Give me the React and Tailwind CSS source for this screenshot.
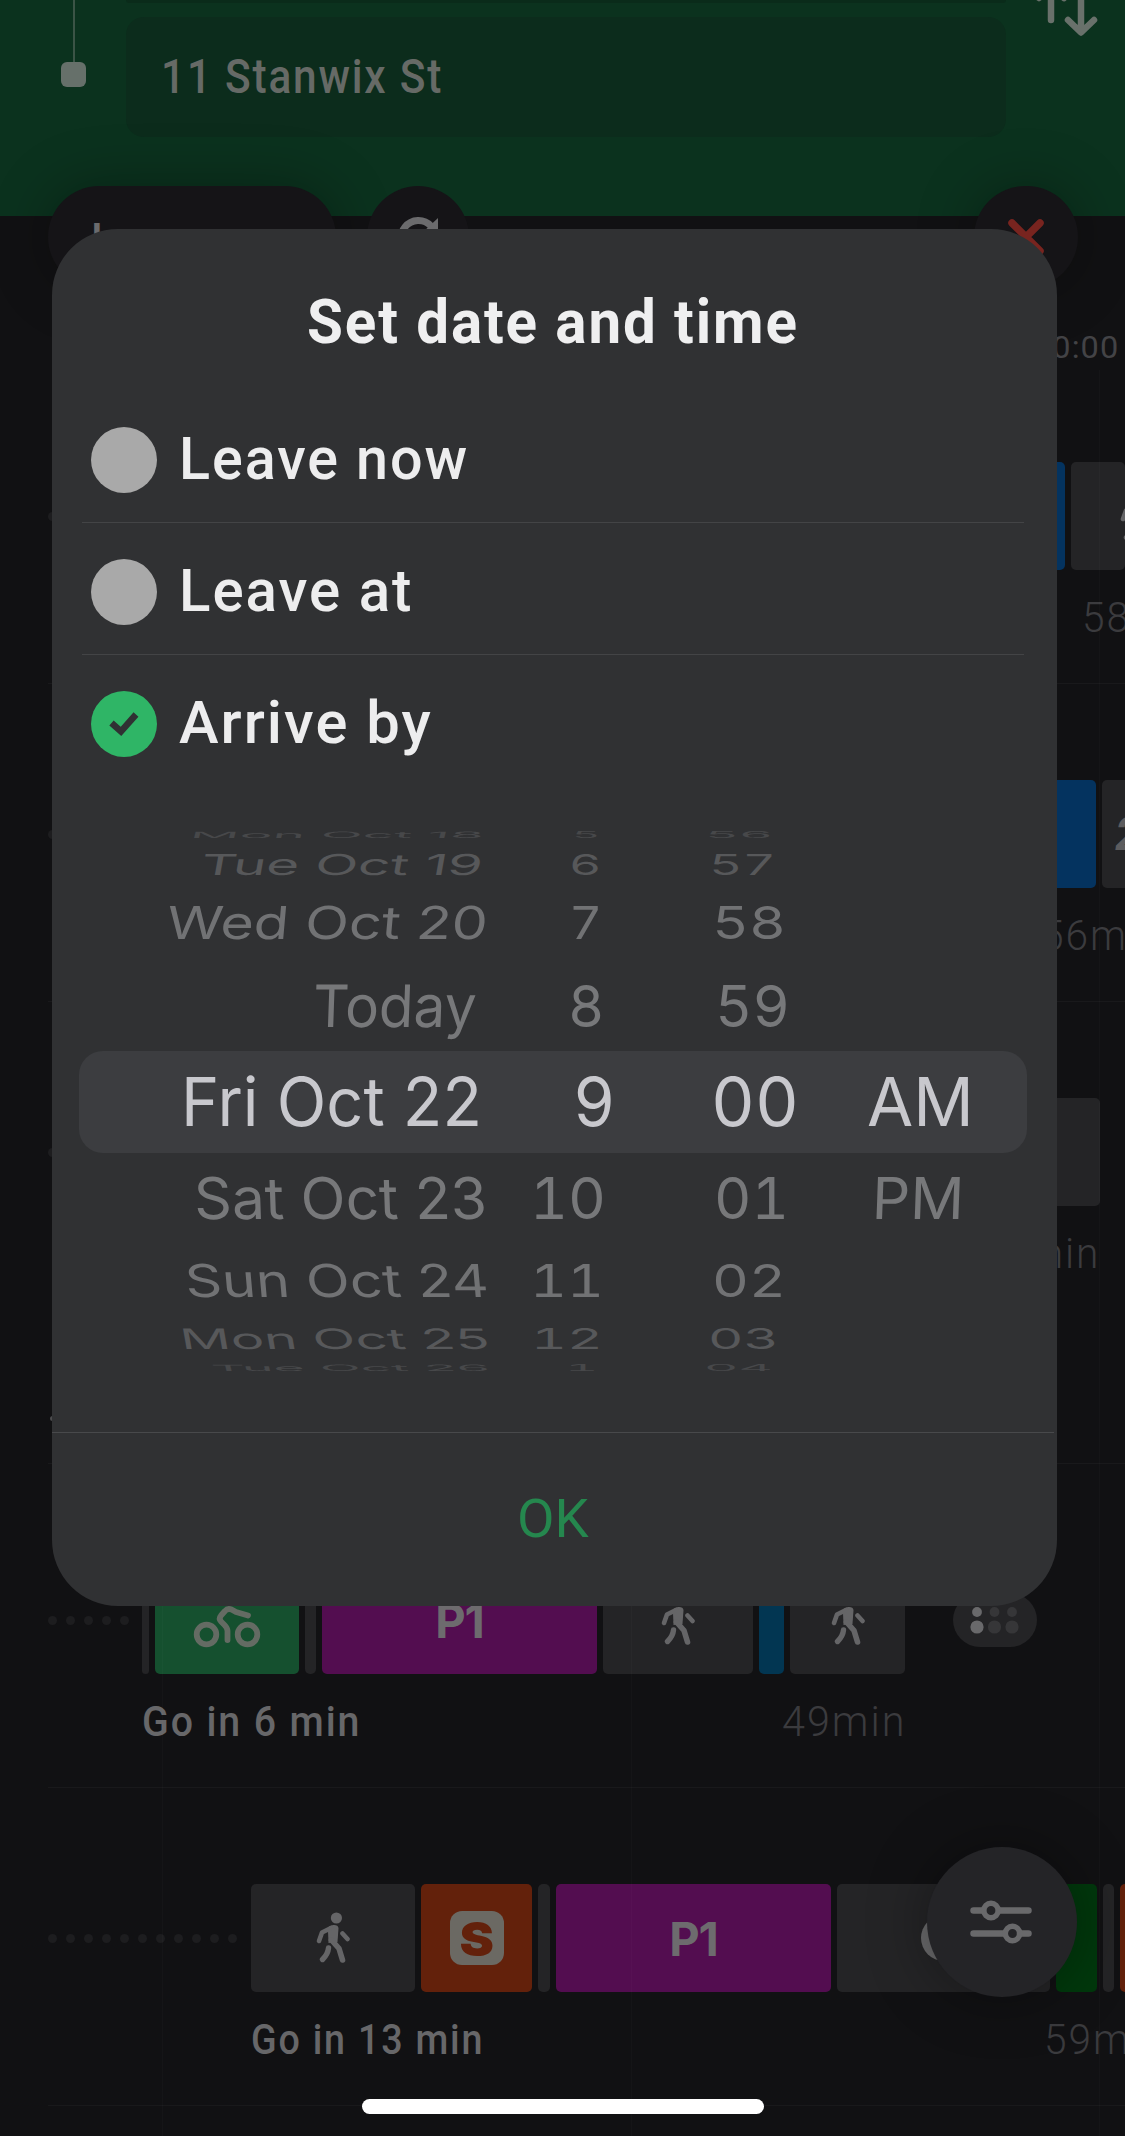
import React, { useLayoutEffect, useRef, useState } from "react";

/* Single line of text stretched horizontally to a fixed width. */
function Fit({ w, sy = 1, skew = 0, className = "", children }) {
  const ref = useRef(null);
  const [sx, setSx] = useState(1);
  useLayoutEffect(() => {
    setSx(w / ref.current.offsetWidth);
  }, [w, children]);
  return (
    <span className="flex shrink-0 items-center" style={{ width: w }}>
      <span
        ref={ref}
        className={`inline-block origin-left whitespace-nowrap leading-none ${className}`}
        style={{ transform: `skewX(${skew}deg) scale(${sx}, ${sy})` }}
      >
        {children}
      </span>
    </span>
  );
}

function Walk({ className = "" }) {
  return (
    <svg className={`shrink-0 ${className}`} width="34" height="52" viewBox="0 0 34 52" fill="none" stroke="#656567" strokeLinecap="round" strokeLinejoin="round">
      <circle cx="20.4" cy="6" r="5.6" fill="#656567" stroke="none" />
      <path d="M13 14.500 L17 13 Q22 12.500 22.500 16 L21.500 30 L12.500 31 L12 19 Z" fill="#656567" stroke="none" />
      <path d="M15 16 L6 20.500 L3 29" strokeWidth="4.6" />
      <path d="M26.500 21.500 L31.500 27" strokeWidth="4.6" />
      <path d="M15.500 28 L23 36.500 L26.500 48" strokeWidth="5.6" />
      <path d="M12.500 36 Q12 42 6.500 47.500" strokeWidth="5.4" />
    </svg>
  );
}

function Bike() {
  return (
    <svg className="shrink-0" width="68" height="56" viewBox="0 0 68 56" fill="none" stroke="#646b63" strokeWidth="5.8" strokeLinecap="round" strokeLinejoin="round">
      <circle cx="13.500" cy="42.500" r="9.800" />
      <circle cx="54.500" cy="42.500" r="9.800" />
      <path d="M34.500 48 V39 Q34.500 36 31.500 33 L28 29.500 Q25.500 26.500 28 23.500 L32 19 Q34.500 16 38.500 17.500 L43 20 L55 23.500" />
    </svg>
  );
}

function Sneaker() {
  return (
    <span className="flex h-[54px] w-[54px] items-center justify-center rounded-[12px] bg-[#6b6963]">
      <span className="scale-x-110 font-['Inter'] text-[47px] font-black leading-none text-[#63210b]">S</span>
    </span>
  );
}

const P1 = () => <span className="font-['Inter'] text-[47px] font-bold leading-none tracking-[-1px] text-[#6d6b6e]">P1</span>;

function Row({ pad = "pt-[96px]", line = "border-[#19191b]", start, dots = 1, bars, note, noteW, time, timeW, timeStart, badge }) {
  return (
    <div className={`ml-12 w-[1077px] shrink-0 border-b ${line} ${pad}`}>
      <div className="flex h-[108px] items-center">
        <div className="flex shrink-0 gap-[9px]" style={{ width: start - 48 }}>
          {Array.from({ length: dots }, (_, i) => (
            <i key={i} className="h-[9px] w-[9px] shrink-0 rounded-full bg-[#1d1d1f]" />
          ))}
        </div>
        <div className="flex shrink-0 gap-[6px]">
          {bars.map(([w, color, content], i) => (
            <div key={i} className={`flex h-[108px] shrink-0 items-center justify-center overflow-hidden rounded-[5px] ${color}`} style={{ width: w }}>
              {content}
            </div>
          ))}
        </div>
        {badge}
      </div>
      <div className="flex h-[95px] items-center">
        <div className="flex shrink-0" style={{ width: start - 48 }} />
        {note && <Fit w={noteW} className="font-['Roboto'] text-[42px] font-medium tracking-[2px] text-[#676769]">{note}</Fit>}
        <div className="shrink-0" style={{ width: timeStart - start - (note ? noteW : 0) }} />
        <Fit w={timeW} className="font-['Roboto'] text-[42px] font-light tracking-[2px] text-[#3b3b3e]">{time}</Fit>
      </div>
      <div className="h-[18px]" />
    </div>
  );
}

const GRAY = "bg-[#242426]";
const PURPLE = "bg-[#530d50]";

const wheel = [
  { h: 20, sy: 0.13, color: "text-[#47484a]", d: ["Mon Oct 18", 190, 294, -14], hr: ["5", 572, 28], m: ["56", 705, 68] },
  { h: 39, sy: 0.43, color: "text-[#57585a]", d: ["Tue Oct 19", 201, 282, -10], hr: ["6", 569, 32], m: ["57", 709, 67] },
  { h: 77, sy: 0.68, color: "text-[#717274]", d: ["Wed Oct 20", 167, 321, -5], hr: ["7", 569, 33], m: ["58", 712, 74] },
  { h: 90, sy: 0.87, color: "text-[#77787a]", d: ["Today", 313, 164, -2], hr: ["8", 568, 36], m: ["59", 715, 75] },
  { h: 102, sy: 1, color: "text-[#c8c8cd]", d: ["Fri Oct 22", 181, 301, 0], hr: ["9", 573, 42], m: ["00", 711, 88], ap: ["AM", 867, 107, 0] },
  { h: 89, sy: 0.86, color: "text-[#77787a]", d: ["Sat Oct 23", 194, 293, 2], hr: ["10", 530, 76], m: ["01", 714, 75], ap: ["PM", 872, 92, -2] },
  { h: 77, sy: 0.68, color: "text-[#717274]", d: ["Sun Oct 24", 185, 303, 5], hr: ["11", 530, 74], m: ["02", 712, 74] },
  { h: 40, sy: 0.42, color: "text-[#57585a]", d: ["Mon Oct 25", 180, 309, 10], hr: ["12", 531, 72], m: ["03", 708, 71] },
  { h: 18, sy: 0.13, color: "text-[#47484a]", d: ["Tue Oct 26", 211, 279, 14], hr: ["1", 565, 33], m: ["04", 704, 69] },
];

function WheelRow({ row }) {
  const cells = [row.d, row.hr, row.m, row.ap].filter(Boolean);
  let x = 79;
  return (
    <div className={`flex shrink-0 items-center ${row.sy === 1 ? "rounded-[24px] bg-[#3c3d40]" : ""}`} style={{ height: row.h }}>
      {cells.map(([t, left, w, skew = 0], i) => {
        const gap = left - x;
        x = left + w;
        return (
          <div key={left} className="-mt-px flex shrink-0" style={{ paddingLeft: gap }}>
            <Fit w={w} sy={row.sy} skew={skew} className={`font-['Inter'] text-[67px] ${i > 0 ? "tabular-nums" : ""} ${row.color}`}>{t}</Fit>
          </div>
        );
      })}
    </div>
  );
}

function Option({ label, w, checked }) {
  return (
    <div className="flex h-[132px] items-center pl-[39px]">
      <span className={`-mt-px flex h-[66px] w-[66px] items-center justify-center rounded-full ${checked ? "bg-[#2fb566]" : "bg-[#a9a9a9]"}`}>
        {checked && (
          <svg width="30" height="26" viewBox="0 0 30 26" fill="none" stroke="#303133" strokeWidth="6.500">
            <path d="M2.500 12 L12 20.500 L27 3.500" />
          </svg>
        )}
      </span>
      <div className="-mt-[3px] ml-[22px]">
        <Fit w={w} className="font-['Roboto'] text-[59px] font-medium tracking-[2px] text-[#ededee]">{label}</Fit>
      </div>
    </div>
  );
}

const OptionLine = () => <div className="ml-[30px] mr-[33px] -mb-[0px] -mt-[4px] h-px bg-[#434446]" />;

function Timeline() {
  return (
    <div className="flex flex-col">
      <header className="flex h-[216px] shrink-0 bg-[#0b321e]">
        <div className="flex w-[126px] flex-col items-start pl-[61px]">
          <div className="ml-[12px] h-[62px] w-[2px] bg-[#3b5446]" />
          <div className="h-[25px] w-[25px] rounded-[6px] bg-[#66706a]" />
        </div>
        <div className="flex w-[880px] flex-col">
          <div className="h-[3px] rounded-b-[16px] bg-[#0a2b1a]" />
          <div className="mt-[14px] flex h-[120px] items-center rounded-[18px] bg-[#0c2c1c] pl-[35px]">
            <Fit w={282} className="font-['Roboto'] text-[48px] font-medium tracking-[2px] text-[#666a66]">11 Stanwix St</Fit>
          </div>
        </div>
        <svg className="ml-[26px]" width="70" height="44" viewBox="0 0 70 44" fill="none" stroke="#69716b" strokeWidth="6.500" strokeLinecap="round" strokeLinejoin="round">
          <path d="M19 -10 V20 M7 -2 L19 -14 L32 -2" />
          <path d="M49 -10 V32 M36 20 L49 32.500 L62 20" />
        </svg>
      </header>
      <div className="flex h-[150px] shrink-0 justify-end pr-[6px] pt-[110px]">
        <div className="flex h-[42px] items-center">
          <Fit w={86} className="font-['Roboto'] text-[31px] tracking-[1px] text-[#434346]">10:00</Fit>
        </div>
      </div>
      <Row start={900} bars={[[165, "bg-[#04335f]"], [54, GRAY, <Walk key="w" className="ml-[78px]" />]]} time="58min" timeW={122} timeStart={1082} />
      <Row
        start={900}
        bars={[[196, "bg-[#04335f]"], [90, GRAY, <span key="t" className="-ml-[38px] font-['Roboto'] text-[46px] font-bold italic text-[#5c5c5e]">2</span>]]}
        time="56min"
        timeW={122}
        timeStart={1041}
      />
      <Row line="border-transparent" start={900} bars={[[200, GRAY]]} time="48min" timeW={122} timeStart={978} />
      <div className="ml-12 flex h-[144px] shrink-0 items-end border-b border-[#19191b] pb-[42px]">
        <i className="ml-[2px] h-[5px] w-[5px] rounded-full bg-[#4c4c4e]" />
      </div>
      <Row
        pad="pt-[102px]"
        start={142}
        dots={5}
        bars={[
          [7, GRAY],
          [144, "bg-[#15502f]", <Bike key="b" />],
          [11, GRAY],
          [275, PURPLE, <P1 key="p" />],
          [150, GRAY, <Walk key="w" />],
          [25, "bg-[#023652]"],
          [115, GRAY, <Walk key="w" />],
        ]}
        note="Go in 6 min"
        noteW={219}
        time="49min"
        timeW={124}
        timeStart={782}
        badge={
          <svg className="ml-12 shrink-0 rounded-full bg-[#242426]" width="84" height="54" viewBox="0 0 84 54">
            {[24, 41.5, 59].map((x, i) => (
              <g key={x} fill={i === 0 ? "#69696b" : "#363638"}>
                <circle cx={x} cy="19" r="4.9" />
                <circle cx={x} cy="34" r="6.600" />
              </g>
            ))}
          </svg>
        }
      />
      <Row
        start={251}
        dots={11}
        bars={[
          [164, GRAY, <Walk key="w" />],
          [111, "bg-[#63210b]", <Sneaker key="s" />],
          [12, GRAY],
          [275, PURPLE, <P1 key="p" />],
          [213, GRAY, <i key="c" className="h-[46px] w-[46px] rounded-full bg-[#69696b]" />],
          [41, "bg-[#00380c]"],
          [11, GRAY],
          [60, "bg-[#63210b]"],
        ]}
        note="Go in 13 min"
        noteW={233}
        time="59min"
        timeW={122}
        timeStart={1044}
      />
    </div>
  );
}

export default function App() {
  return (
    <div className="relative h-[2136px] w-[1125px] overflow-hidden bg-[#111113]">
      <Timeline />

      {/* hour grid lines */}
      <i className="absolute left-[162px] top-[370px] h-[1766px] w-px bg-white/[0.02]" />
      <i className="absolute left-[631px] top-[370px] h-[1766px] w-px bg-white/[0.02]" />
      <i className="absolute left-[1099px] top-[370px] h-[1766px] w-px bg-white/[0.02]" />

      {/* floating controls */}
      <div className="absolute left-12 top-[186px] flex h-[102px] w-[1030px]">
        <div className="flex w-[288px] items-center rounded-full bg-[#151417] pl-[43px] pt-[6px] shadow-[0_0_60px_rgba(0,0,0,0.3)]">
          <span className="font-['Roboto'] text-[44px] font-medium leading-none text-[#6b6b6d]">Leave</span>
        </div>
        <div className="ml-[31px] flex w-[102px] items-center justify-center rounded-full bg-[#151417]">
          <svg width="44" height="44" viewBox="0 0 44 44" fill="none" stroke="#6b6b6d" strokeWidth="7">
            <path d="M38.500 28 A17 17 0 1 1 35 11" />
            <path d="M42 3 V18 H26 Z" fill="#6b6b6d" stroke="none" />
          </svg>
        </div>
        <div className="ml-auto flex w-[104px] items-center justify-center rounded-full bg-[#151417] shadow-[0_0_60px_rgba(0,0,0,0.3)]">
          <svg width="40" height="40" viewBox="0 0 40 40" fill="none" stroke="#78241f" strokeWidth="7.500" strokeLinecap="round">
            <path d="M6 6 L34 34 M34 6 L6 34" />
          </svg>
        </div>
      </div>

      <div className="absolute left-[927px] top-[1847px] flex h-[150px] w-[150px] items-center justify-center rounded-full bg-[#242427] shadow-[0_0_60px_rgba(0,0,0,0.35)]">
        <svg className="-ml-[2px]" width="62" height="46" viewBox="0 0 62 46" fill="none" stroke="#69696b" strokeWidth="6.500" strokeLinecap="round">
          <path d="M3.500 11.500 H13 M29 11.500 H58.500" />
          <circle cx="21" cy="11.500" r="7.200" strokeWidth="5.500" />
          <path d="M3.500 34.500 H34 M50 34.500 H58.500" />
          <circle cx="42.500" cy="34.500" r="7.200" strokeWidth="5.500" />
        </svg>
      </div>

      {/* dialog */}
      <div className="absolute left-[52px] top-[229px] flex h-[1377px] w-[1005px] flex-col rounded-[66px] bg-[#303133]">
        <div className="flex h-[165px] shrink-0 items-end justify-center pb-[41px] pr-[3px]">
          <Fit w={492} className="font-['Roboto'] text-[62px] font-bold tracking-[2px] text-[#efeff0]">Set date and time</Fit>
        </div>
        <Option label="Leave now" w={290} />
        <OptionLine />
        <div className="h-[3px]" />
        <Option label="Leave at" w={234} />
        <OptionLine />
        <div className="h-[3px]" />
        <Option label="Arrive by" w={254} checked />
        <div className="mx-[27px] mt-[35px] flex w-[948px] flex-col">
          {wheel.map((row) => (
            <WheelRow key={row.m[0]} row={row} />
          ))}
        </div>
        <button className="mt-auto flex h-[174px] w-[1002px] items-center justify-center border-t border-[#48494b]">
          <Fit w={72} className="font-['Roboto'] text-[53px] text-[#25874e]">OK</Fit>
        </button>
      </div>

      <div className="absolute left-[362px] top-[2099px] h-[15px] w-[402px] rounded-full bg-white" />
    </div>
  );
}
